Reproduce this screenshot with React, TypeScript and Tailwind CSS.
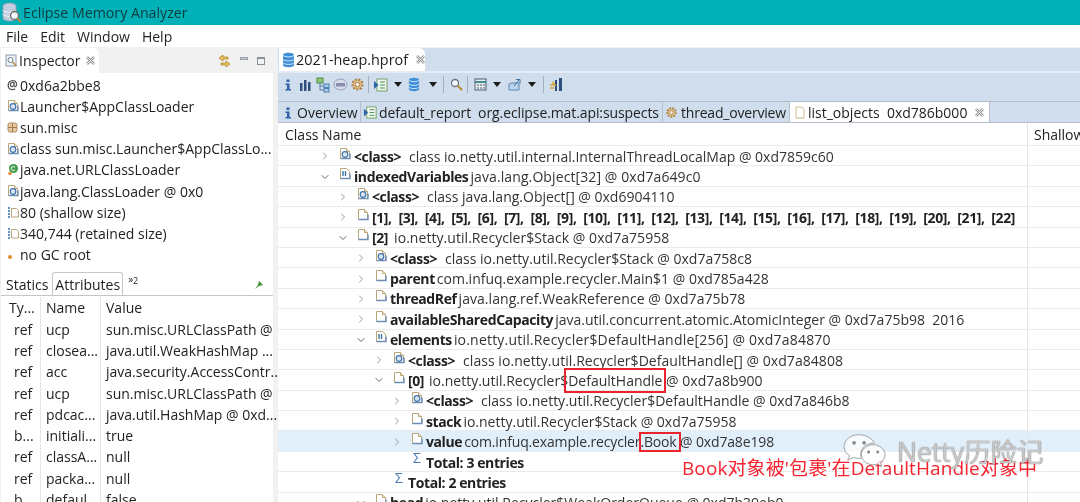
import React from 'react';
import { ChevronRight, ChevronDown } from 'lucide-react';

const PageIcon: React.FC<{ badge?: 'c' | 'none'; className?: string }> = ({ badge = 'none', className = '' }) => (
  <svg width="13" height="14" viewBox="0 0 13 14" className={`shrink-0 ${className}`}>
    <path d="M1.5 1.5h6l3 3v7h-9z" fill="#fff" stroke="#b9a77c" strokeWidth="1" />
    <path d="M7.5 1.5v3h3" fill="#f3e9c9" stroke="#b9a77c" strokeWidth="1" />
    <path d="M1.5 11.5h9.500v-5" fill="none" stroke="#6d8db5" strokeWidth="1.400" />
    {badge === 'c' && <circle cx="6" cy="7.500" r="2.800" fill="#dbe7f4" stroke="#3f73a8" strokeWidth="1.200" />}
  </svg>
);

const ArrIcon = () => (
  <svg width="13" height="14" viewBox="0 0 13 14" className="shrink-0">
    <path d="M1.5 1.5h6l3 3v7h-9z" fill="#fff" stroke="#b9a77c" />
    <path d="M1.5 11.5h9.500v-5" fill="none" stroke="#6d8db5" strokeWidth="1.400" />
    <path d="M4 4v5M6.500 4v5" stroke="#3f73a8" strokeWidth="1.400" />
  </svg>
);

const Sigma = () => <span className="text-[14px] leading-none text-[#4a78b0] pl-[2px] -mt-[3px] shrink-0">Σ</span>;

const InfoIcon: React.FC = () => (
  <svg width="8" height="14" viewBox="0 0 8 14" className="shrink-0">
    <rect x="2.5" y="1.5" width="3" height="2.500" fill="#2b62a8" />
    <path d="M1.5 5.500h4V11H7v1.500H1.500V11H3V7H1.500z" fill="#2b62a8" />
  </svg>
);

const BarsIcon = () => (
  <svg width="12" height="12" viewBox="0 0 12 12" className="shrink-0">
    <path d="M1 4h2.500v8H1zM5 1h2.500v11H5zM9 3h2.500v9H9z" fill="#2f4f7f" />
  </svg>
);

const TreeIcon = () => (
  <svg width="16" height="16" viewBox="0 0 16 16" className="shrink-0">
    <rect x="1" y="1" width="6" height="5" fill="#8fc77a" stroke="#4d8a3c" />
    <path d="M4 6v7h4M4 9h4" stroke="#5b7fa8" fill="none" />
    <rect x="8" y="7" width="5" height="3.500" fill="#a9cbe9" stroke="#4a7fb0" />
    <rect x="8" y="11.500" width="5" height="3.500" fill="#a9cbe9" stroke="#4a7fb0" />
  </svg>
);

const OqlIcon = () => (
  <svg width="15" height="13" viewBox="0 0 15 13" className="shrink-0">
    <ellipse cx="7.500" cy="6.500" rx="6.500" ry="5.500" fill="#d9dcec" stroke="#9aa0bd" />
    <rect x="3" y="5" width="9" height="3.500" fill="#8a8fb2" />
  </svg>
);

const GearIcon: React.FC<{ size?: number }> = ({ size = 15 }) => (
  <svg width={size} height={size} viewBox="0 0 15 15" className="shrink-0">
    <circle cx="7.500" cy="7.500" r="5" fill="#e4c08a" stroke="#a8824a" strokeWidth="2.200" strokeDasharray="2 1.400" />
    <circle cx="7.500" cy="7.500" r="2.200" fill="#f3f0e6" stroke="#a8824a" />
  </svg>
);

const ReportIcon: React.FC<{ size?: number }> = ({ size = 16 }) => (
  <svg width={size} height={size} viewBox="0 0 16 16" className="shrink-0">
    <rect x="4" y="2" width="10" height="12" fill="#f1f8ee" stroke="#6f9f6a" />
    <path d="M7 5h5M7 8h5M7 11h5" stroke="#4d8a5a" />
    <path d="M1 4l4.500 4L1 12z" fill="#2b62a8" />
  </svg>
);

const DropArrow = () => (
  <span className="w-0 h-0 border-x-[4.500px] border-x-transparent border-t-[5px] border-t-[#1c1c1c] shrink-0" />
);

const Sep = () => <span className="w-px h-[17px] bg-[#9fb0c2] shrink-0" />;

const DbIcon: React.FC<{ size?: number }> = ({ size = 13 }) => (
  <svg width={size} height={size + 3} viewBox="0 0 13 16" className="shrink-0">
    <path d="M1 3c0-3 11-3 11 0v10c0 3-11 3-11 0z" fill="#3f8ed6" />
    <path d="M1 3c0 2.500 11 2.500 11 0M1 7c0 2.500 11 2.500 11 0M1 10.500c0 2.500 11 2.500 11 0" stroke="#d8ecfb" fill="none" />
  </svg>
);

const LogoIcon = () => (
  <svg width="20" height="22" viewBox="0 0 20 22" className="shrink-0">
    <path d="M1 4c0-4 13-4 13 0v12c0 4-13 4-13 0z" fill="#c3cfe0" stroke="#8fa1ba" />
    <path d="M1 8c0 3 13 3 13 0M1 12c0 3 13 3 13 0" stroke="#eef3f9" fill="none" />
    <circle cx="12.500" cy="13.500" r="4" fill="#eef4fb" stroke="#6b6b5c" strokeWidth="1.300" />
    <path d="M15.500 16.500l3.500 3.500" stroke="#b58a3a" strokeWidth="2.200" />
  </svg>
);

const CloseX: React.FC = () => (
  <svg width="9" height="9" viewBox="0 0 9 9" className="shrink-0">
    <path d="M1 1l7 7M8 1L1 8" stroke="#9a9a9a" strokeWidth="2.600" />
    <path d="M1 1l7 7M8 1L1 8" stroke="#fff" strokeWidth="0.800" />
  </svg>
);

function SizeIcon() {
  return (
    <svg width="13" height="13" viewBox="0 0 13 13">
      <path d="M2 1v11" stroke="#2f6fb0" strokeDasharray="2 1" strokeWidth="1.500" />
      <path d="M4.500 2.500h5l2 2v6.500h-7z" fill="#fff" stroke="#b9a77c" />
    </svg>
  );
}

const inspectorRows: { icon: React.ReactNode; text: string }[] = [
  { icon: <span className="text-[12px] font-bold text-[#555] leading-none">@</span>, text: '0xd6a2bbe8' },
  { icon: <PageIcon badge="c" />, text: 'Launcher$AppClassLoader' },
  {
    icon: (
      <svg width="11" height="11" viewBox="0 0 11 11">
        <rect x="1" y="1" width="9" height="9" rx="2" fill="#e5c9a4" stroke="#b08d62" />
        <path d="M5.500 1v9M1 5.500h9" stroke="#a57a4a" />
      </svg>
    ),
    text: 'sun.misc',
  },
  { icon: <PageIcon badge="c" />, text: 'class sun.misc.Launcher$AppClassLo...' },
  {
    icon: (
      <svg width="13" height="13" viewBox="0 0 13 13">
        <circle cx="6.500" cy="5.500" r="4.500" fill="#3f9c4a" />
        <path d="M8 4.500a2 2 0 1 0 0 2" stroke="#fff" fill="none" />
        <circle cx="3" cy="10.500" r="1.800" fill="#e08f3c" />
      </svg>
    ),
    text: 'java.net.URLClassLoader',
  },
  { icon: <PageIcon badge="c" />, text: 'java.lang.ClassLoader @ 0x0' },
  { icon: <SizeIcon />, text: '80 (shallow size)' },
  { icon: <SizeIcon />, text: '340,744 (retained size)' },
  { icon: <span className="w-[4px] h-[4px] mt-[5px] ml-[1px] rounded-full bg-[#e08a2c]" />, text: 'no GC root' },
];

const attrRows = [
  ['ref', 'ucp', 'sun.misc.URLClassPath @'],
  ['ref', 'closea...', 'java.util.WeakHashMap ...'],
  ['ref', 'acc', 'java.security.AccessContr...'],
  ['ref', 'ucp', 'sun.misc.URLClassPath @'],
  ['ref', 'pdcac...', 'java.util.HashMap @ 0xd...'],
  ['b...', 'initiali...', 'true'],
  ['ref', 'classA...', 'null'],
  ['ref', 'packa...', 'null'],
  ['b...', 'defaul...', 'false'],
];

type TreeRow = {
  depth: 0 | 1 | 2 | 3 | 4;
  toggle?: 'open' | 'closed';
  icon: 'class' | 'page' | 'array' | 'sigma';
  bold: string;
  rest?: string;
  restClass?: string;
  selected?: boolean;
  wide?: boolean;
};

const treeRows: TreeRow[] = [
  { depth: 0, toggle: 'closed', icon: 'class', bold: '<class>', rest: 'class io.netty.util.internal.InternalThreadLocalMap @ 0xd7859c60', restClass: 'ml-[8px]' },
  { depth: 0, toggle: 'open', icon: 'array', bold: 'indexedVariables', rest: 'java.lang.Object[32] @ 0xd7a649c0', restClass: 'ml-[2px] tracking-[0.1px]' },
  { depth: 1, toggle: 'closed', icon: 'class', bold: '<class>', rest: 'class java.lang.Object[] @ 0xd6904110', restClass: 'ml-[8px]' },
  { depth: 1, toggle: 'closed', icon: 'page', wide: true, bold: '[1], [3], [4], [5], [6], [7], [8], [9], [10], [11], [12], [13], [14], [15], [16], [17], [18], [19], [20], [21], [22]' },
  { depth: 1, toggle: 'open', icon: 'page', bold: '[2]', rest: 'io.netty.util.Recycler$Stack @ 0xd7a75958', restClass: 'ml-[6px] tracking-[0.05px]' },
  { depth: 2, toggle: 'closed', icon: 'class', bold: '<class>', rest: 'class io.netty.util.Recycler$Stack @ 0xd7a758c8', restClass: 'ml-[8px]' },
  { depth: 2, toggle: 'closed', icon: 'page', bold: 'parent', rest: 'com.infuq.example.recycler.Main$1 @ 0xd785a428', restClass: 'ml-[2px]' },
  { depth: 2, toggle: 'closed', icon: 'page', bold: 'threadRef', rest: 'java.lang.ref.WeakReference @ 0xd7a75b78', restClass: 'ml-[2px] tracking-[0.05px]' },
  { depth: 2, toggle: 'closed', icon: 'page', bold: 'availableSharedCapacity', rest: 'java.util.concurrent.atomic.AtomicInteger @ 0xd7a75b98  2016', restClass: 'ml-[2px]' },
  { depth: 2, toggle: 'open', icon: 'array', bold: 'elements', rest: 'io.netty.util.Recycler$DefaultHandle[256] @ 0xd7a84870', restClass: 'ml-[2px] tracking-[0.2px]' },
  { depth: 3, toggle: 'closed', icon: 'class', bold: '<class>', rest: 'class io.netty.util.Recycler$DefaultHandle[] @ 0xd7a84808', restClass: 'ml-[8px] tracking-[0.05px]' },
  { depth: 3, toggle: 'open', icon: 'page', bold: '[0]', rest: 'io.netty.util.Recycler$DefaultHandle @ 0xd7a8b900', restClass: 'ml-[5px]' },
  { depth: 4, toggle: 'closed', icon: 'class', bold: '<class>', rest: 'class io.netty.util.Recycler$DefaultHandle @ 0xd7a846b8', restClass: 'ml-[8px]' },
  { depth: 4, toggle: 'closed', icon: 'page', bold: 'stack', rest: 'io.netty.util.Recycler$Stack @ 0xd7a75958', restClass: 'ml-[2px]' },
  { depth: 4, toggle: 'closed', icon: 'page', bold: 'value', rest: 'com.infuq.example.recycler.Book @ 0xd7a8e198', restClass: 'ml-[2px] tracking-[-0.15px]', selected: true },
  { depth: 4, icon: 'sigma', bold: 'Total: 3 entries' },
  { depth: 3, icon: 'sigma', bold: 'Total: 2 entries' },
  { depth: 2, toggle: 'open', icon: 'page', bold: 'head', rest: 'io.netty.util.Recycler$WeakOrderQueue @ 0xd7b39eb0', restClass: 'ml-[2px]' },
];

const depthPad = ['pl-[41px]', 'pl-[59px]', 'pl-[77px]', 'pl-[95px]', 'pl-[113px]'];

const Row: React.FC<{ row: TreeRow }> = ({ row }) => (
  <div className={`flex h-[20.4px] shrink-0 border-b border-[#ebebeb] ${row.selected ? 'bg-[#e1effb]' : ''}`}>
    <div className={`flex items-center pt-[1px] min-w-0 flex-1 whitespace-nowrap ${depthPad[row.depth]}`}>
      <span className="w-[20px] shrink-0 flex items-center">
        {row.toggle === 'open' && <ChevronDown size={12} strokeWidth={2} className="text-[#666]" />}
        {row.toggle === 'closed' && <ChevronRight size={12} strokeWidth={2} className="text-[#999]" />}
      </span>
      <span className="w-[15px] shrink-0 flex items-center -mt-[5px]">
        {row.icon === 'class' && <PageIcon badge="c" />}
        {row.icon === 'page' && <PageIcon />}
        {row.icon === 'array' && <ArrIcon />}
        {row.icon === 'sigma' && <Sigma />}
      </span>
      <span className={`font-bold tracking-[-0.4px] ${row.wide ? '[word-spacing:3.5px]' : ''}`}>{row.bold}</span>
      {row.rest && <span className={`text-[#333] whitespace-pre ${row.restClass ?? ''}`}>{row.rest}</span>}
    </div>
    <div className="w-[53px] shrink-0 border-l border-[#e4e4e4]" />
  </div>
);

const SubTab: React.FC<{ icon: React.ReactNode; text: string; active?: boolean; w: string; gap?: string; textClass?: string }> = ({ icon, text, active, w, gap = 'gap-[3px]', textClass = '' }) => (
  <div className={`flex items-center h-full pt-[1px] pl-[2px] shrink-0 whitespace-pre border-r border-[#b4bfcb] ${gap} ${w} ${active ? 'bg-white' : ''}`}>
    {icon}
    <span className={`text-[#222] ${textClass}`}>{text}</span>
    {active && <span className="ml-[5px]"><CloseX /></span>}
  </div>
);

const Cell: React.FC<{ w: string; children: React.ReactNode }> = ({ w, children }) => (
  <span className={`flex items-center justify-center shrink-0 ${w}`}>{children}</span>
);

export default function App() {
  return (
    <div className="relative w-[1080px] h-[502px] overflow-hidden flex flex-col bg-[#f1f1f1] text-[#222] text-[14px] font-['Open_Sans','Noto_Sans_CJK_SC',sans-serif] blur-[0.4px]">
      {/* title bar */}
      <div className="h-[25px] shrink-0 bg-[#00b1b8] flex items-center gap-[1px] pl-[2px] text-[#0f3a3e]">
        <LogoIcon />
        <span className="text-[14.200px]">Eclipse Memory Analyzer</span>
      </div>

      {/* menu */}
      <div className="h-[22px] shrink-0 bg-white flex items-center gap-[12px] pl-[6px]">
        <span>File</span>
        <span>Edit</span>
        <span>Window</span>
        <span>Help</span>
      </div>

      <div className="flex-1 flex min-h-0 pt-[1px]">
        {/* left column */}
        <div className="w-[272px] shrink-0 flex flex-col ml-[1px] bg-white">
          <div className="h-[25px] shrink-0 bg-[#f1f1f1] flex items-stretch">
            <div className="w-[98px] bg-white rounded-tr-[6px] flex items-center gap-[1px] pl-[4px]">
              <svg width="13" height="14" viewBox="0 0 13 14" className="shrink-0">
                <rect x="1" y="1" width="10" height="11" fill="#eef2f7" stroke="#8c9bb0" />
                <circle cx="5.500" cy="6" r="2.500" fill="#fff" stroke="#6c7c92" />
                <path d="M7.500 8l4 4" stroke="#b58a3a" strokeWidth="1.500" />
              </svg>
              <span>Inspector</span>
              <span className="ml-[5px]"><CloseX /></span>
            </div>
            <div className="flex-1 flex items-center justify-end gap-[9px] pr-[8px]">
              <svg width="13" height="14" viewBox="0 0 13 14">
                <path d="M5 1L1 4l4 3V5h5V3H5zM8 7l4 3-4 3v-2H3V9h5z" fill="#e7c35b" stroke="#b07b26" strokeWidth="0.700" />
              </svg>
              <span className="w-[8px] h-[3px] bg-[#c8ccd2] border border-[#9aa0a8] mb-[5px]" />
              <span className="w-[8px] h-[8px] border border-[#8a9098] border-t-[2px]" />
            </div>
          </div>

          <div className="flex flex-col pl-[5px] pt-[1.500px] shrink-0">
            {inspectorRows.map((r, i) => (
              <div key={i} className="h-[21.200px] flex items-center whitespace-nowrap">
                <span className="w-[14px] shrink-0 flex items-center justify-start pl-[1px]">{r.icon}</span>
                <span>{r.text}</span>
              </div>
            ))}
          </div>

          {/* bottom tabs */}
          <div className="mt-[7px] h-[24px] shrink-0 flex items-end pl-[2px] border-b border-[#c5c5c5]">
            <span className="h-[23px] flex items-center pl-[3px] pr-[4px] pt-[1px]">Statics</span>
            <span className="h-[23px] flex items-center px-[2px] pt-[1px] border border-b-0 border-[#c5c5c5] rounded-t-[3px] bg-white">Attributes</span>
            <span className="h-[23px] flex items-start pl-[5px] text-[10px] leading-[14px]">»<sub className="text-[9px] mt-[7px]">2</sub></span>
            <span className="ml-auto mr-[9px] mb-[6px]">
              <svg width="9" height="9" viewBox="0 0 9 9"><path d="M0 9l3-4 1-4 4 4-4 1z" fill="#3d8f34" /></svg>
            </span>
          </div>

          {/* attributes table */}
          <div className="grid grid-cols-[37px_60px_1fr] ml-[3px] pt-[1px] text-[#222] whitespace-nowrap">
            <span className="h-[21.300px] flex items-center pl-[5px] border-r border-[#e6e6e6]">Ty...</span>
            <span className="h-[21.300px] flex items-center pl-[5px] border-r border-[#e6e6e6]">Name</span>
            <span className="h-[21.300px] flex items-center pl-[5px]">Value</span>
            {attrRows.map((r, i) => (
              <React.Fragment key={i}>
                <span className="h-[21.300px] flex items-center pl-[10px] border-r border-[#e6e6e6]">{r[0]}</span>
                <span className="h-[21.300px] flex items-center pl-[5px] border-r border-[#e6e6e6]">{r[1]}</span>
                <span className="h-[21.300px] flex items-center pl-[5px]">{r[2]}</span>
              </React.Fragment>
            ))}
          </div>
        </div>

        {/* right column */}
        <div className="flex-1 min-w-0 flex flex-col ml-[5px] bg-[#cfddec] overflow-hidden">
          <div className="h-[25px] shrink-0 flex border-b-[2px] border-[#e4ebf3]">
            <div className="w-[146px] bg-white rounded-tr-[6px] flex items-center whitespace-nowrap gap-[1px] pl-[3px] ml-[1px]">
              <DbIcon />
              <span className="text-[14.400px]">2021-heap.hprof</span>
              <span className="ml-[7px]"><CloseX /></span>
            </div>
          </div>

          <div className="h-[29px] shrink-0 flex items-center pl-[2px] pb-[5px] border-b border-[#b4bfcb]">
            <Cell w="w-[16px]"><InfoIcon /></Cell>
            <Cell w="w-[18px]"><BarsIcon /></Cell>
            <Cell w="w-[20px]"><TreeIcon /></Cell>
            <Cell w="w-[12px]"><OqlIcon /></Cell>
            <Cell w="w-[22px]"><GearIcon /></Cell>
            <Cell w="w-0"><Sep /></Cell>
            <Cell w="w-[26px]"><ReportIcon /></Cell>
            <Cell w="w-[8px]"><DropArrow /></Cell>
            <Cell w="w-[24px]"><DbIcon size={12} /></Cell>
            <Cell w="w-[14px]"><DropArrow /></Cell>
            <Cell w="w-[6px]"><Sep /></Cell>
            <Cell w="w-[20px]">
              <svg width="13" height="13" viewBox="0 0 13 13" className="shrink-0">
                <circle cx="5" cy="5" r="3.500" fill="#f4f7fb" stroke="#6a7686" strokeWidth="1.300" />
                <path d="M7.500 7.500l4.500 4.500" stroke="#b58a3a" strokeWidth="2" />
              </svg>
            </Cell>
            <Cell w="w-[2px]"><Sep /></Cell>
            <Cell w="w-[24px]">
              <svg width="13" height="13" viewBox="0 0 13 13" className="shrink-0">
                <rect x="1" y="1" width="11" height="11" fill="#e9edf2" stroke="#4d5d70" />
                <path d="M1 4h11" stroke="#3f8a8e" strokeWidth="2" />
                <path d="M3 7h2M6 7h2M9 7h2M3 10h2M6 10h2M9 10h2" stroke="#4d5d70" />
              </svg>
            </Cell>
            <Cell w="w-[10px]"><DropArrow /></Cell>
            <Cell w="w-[26px]">
              <svg width="15" height="13" viewBox="0 0 15 13" className="shrink-0">
                <path d="M1 6l3-1h7v7H1z" fill="#bcd3ec" stroke="#5d88b5" />
                <path d="M6 8l5-6M8 1.500h4v4" stroke="#3f73a8" fill="none" />
              </svg>
            </Cell>
            <Cell w="w-[8px]"><DropArrow /></Cell>
            <Cell w="w-[14px]"><Sep /></Cell>
            <Cell w="w-[12px]">
              <svg width="14" height="15" viewBox="0 0 14 15" className="shrink-0">
                <path d="M6 3h2v11H6zM10 1h3v13h-3z" fill="#2f4f7f" />
                <path d="M1 8h5l-2.500-3M1 11h4" stroke="#d9a52e" strokeWidth="1.600" fill="none" />
              </svg>
            </Cell>
          </div>

          {/* editor tabs */}
          <div className="h-[21px] shrink-0 flex pl-[2px] border-b border-[#b4bfcb]">
            <SubTab w="w-[81px]" icon={<span className="ml-[2px] mr-[2px]"><InfoIcon /></span>} text="Overview" />
            <SubTab w="w-[302px]" gap="gap-[1px]" textClass="tracking-[-0.1px]" icon={<ReportIcon size={15} />} text="default_report  org.eclipse.mat.api:suspects" />
            <SubTab w="w-[127px]" textClass="tracking-[-0.2px]" icon={<GearIcon size={13} />} text="thread_overview" />
            <SubTab w="w-[200px]" active icon={<span className="ml-[3px]"><svg width="10" height="13" viewBox="0 0 10 13"><path d="M1 1h5.500L9 3.500V12H1z" fill="#fff" stroke="#c9b98d" /></svg></span>} text="list_objects  0xd786b000" />
          </div>

          {/* results table */}
          <div className="flex-1 min-h-0 bg-white flex flex-col overflow-hidden">
            <div className="h-[23px] shrink-0 flex border-b border-[#ebebeb]">
              <span className="flex-1 flex items-center pl-[7px] pt-[1px]">Class Name</span>
              <span className="w-[53px] shrink-0 flex items-center pl-[6px] pt-[1px] border-l border-[#e4e4e4] overflow-hidden">Shallow</span>
            </div>
            {treeRows.map((r, i) => (
              <Row key={i} row={r} />
            ))}
          </div>
        </div>
      </div>

      {/* annotation boxes drawn on top of the screenshot */}
      <div className="absolute left-[564px] top-[368px] w-[102px] h-[25px] border-[2px] border-[#e8242c]" />
      <div className="absolute left-[639px] top-[432px] w-[42px] h-[20px] border-[2px] border-[#e8242c]" />
      <div className="absolute left-[682px] top-[456px] text-[19px] leading-[24px] tracking-[0.1px] text-[#f5232f] whitespace-nowrap">Book对象被'包裹'在DefaultHandle对象中</div>

      {/* watermark */}
      <div className="absolute left-[842px] top-[432px] flex items-center gap-[9px] text-white/60 [text-shadow:0_0_1px_#777,0_0_1px_#777]">
        <svg width="46" height="40" viewBox="0 0 50 44" className="shrink-0">
          <path d="M18 3c-9 0-16 6-16 13 0 4 2 8 6 10l-2 5 6-3c2 .5 4 1 6 1 1 0 2 0 3-.2-.5-1.500-.7-3-.7-4.500 0-6.500 6-12 14-12h1C33 7 26 3 18 3z" fill="#fff" fillOpacity="0.75" stroke="#999" />
          <path d="M34 14c-7 0-13 5-13 11s6 11 13 11c2 0 3-.3 5-.8l4 2.800-1-4.500c3-2 5-5 5-8.500 0-6-6-11-13-11z" fill="#fff" fillOpacity="0.75" stroke="#999" />
          <circle cx="13" cy="12" r="2" fill="#888" />
          <circle cx="24" cy="12" r="2" fill="#888" />
          <circle cx="29" cy="22" r="1.700" fill="#888" />
          <circle cx="39" cy="22" r="1.700" fill="#888" />
        </svg>
        <span className="text-[26.500px] leading-none whitespace-nowrap">Netty历险记</span>
      </div>
    </div>
  );
}
